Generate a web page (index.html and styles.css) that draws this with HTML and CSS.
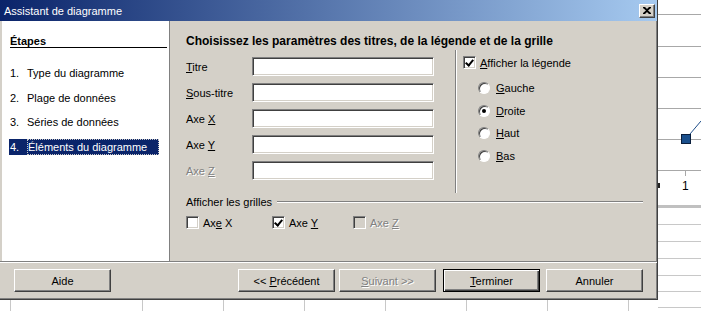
FILE: index.html
```html
<!DOCTYPE html>
<html lang="fr">
    <head>
        <meta charset="UTF-8" />
        <title>Assistant de diagramme</title>
        <link rel="stylesheet" href="styles.css">
    </head>
    <body>
        <div class="desk">
            <svg class="sheet" width="701" height="311" viewBox="0 0 701 311">
                <g stroke="#a8a8a8" stroke-width="1">
                    <line x1="658" y1="14.5" x2="701" y2="14.5" />
                    <line x1="658" y1="46.5" x2="701" y2="46.5" />
                    <line x1="658" y1="77.5" x2="701" y2="77.5" />
                    <line x1="658" y1="108.5" x2="701" y2="108.5" />
                    <line x1="658" y1="139.5" x2="701" y2="139.5" />
                    <line x1="658" y1="170.5" x2="701" y2="170.5" />
                    <line x1="685.5" y1="170" x2="685.5" y2="176" />
                </g>
                <rect x="658" y="205" width="43" height="3" fill="#c0c0c0" />
                <g stroke="#c8c8c8" stroke-width="1">
                    <line x1="658" y1="224.5" x2="701" y2="224.5" />
                    <line x1="658" y1="241.5" x2="701" y2="241.5" />
                    <line x1="658" y1="258.5" x2="701" y2="258.5" />
                    <line x1="658" y1="275.5" x2="701" y2="275.5" />
                    <line x1="658" y1="291.5" x2="701" y2="291.5" />
                    <line x1="658" y1="307.5" x2="701" y2="307.5" />
                    <line x1="10.5" y1="300" x2="10.5" y2="311" />
                    <line x1="142.5" y1="300" x2="142.5" y2="311" />
                    <line x1="223.5" y1="300" x2="223.5" y2="311" />
                    <line x1="304.5" y1="300" x2="304.5" y2="311" />
                    <line x1="385.5" y1="300" x2="385.5" y2="311" />
                    <line x1="466.5" y1="300" x2="466.5" y2="311" />
                    <line x1="547.5" y1="300" x2="547.5" y2="311" />
                    <line x1="628.5" y1="300" x2="628.5" y2="311" />
                </g>
                <line x1="690" y1="134" x2="701" y2="121" stroke="#1f4f8a" stroke-width="1" />
                <rect x="681.5" y="134.5" width="9" height="9" fill="#1a4f8c" stroke="#0a1e3c" />
                <rect x="658" y="183" width="2" height="5" fill="#222" />
                <text x="682" y="190" class="axis-num">1</text>
            </svg>

            <div class="dialog">
                <div class="titlebar">
                    <span>Assistant de diagramme</span>
                    <div class="close">
                        <svg width="8" height="7" viewBox="0 0 8 7">
                            <path d="M0 0h2l2 2 2-2h2v1L5 3.5 8 6v1H6L4 5 2 7H0V6l3-2.5L0 1z" fill="#000" />
                        </svg>
                    </div>
                </div>

                <div class="main">
                    <div class="steps">
                        <div class="steps-head">Étapes</div>
                        <ul class="step-list">
                            <li><span class="num">1.</span><span>Type du diagramme</span></li>
                            <li><span class="num">2.</span><span>Plage de données</span></li>
                            <li><span class="num">3.</span><span>Séries de données</span></li>
                            <li class="current"><span class="num">4.</span><span class="focus">Éléments du diagramme</span></li>
                        </ul>
                    </div>

                    <div class="content">
                        <h1>Choisissez les paramètres des titres, de la légende et de la grille</h1>
                        <div class="cols">
                            <div class="titles">
                                <label><u>T</u>itre</label>
                                <div class="field"></div>
                                <label><u>S</u>ous-titre</label>
                                <div class="field"></div>
                                <label>Axe <u>X</u></label>
                                <div class="field"></div>
                                <label>Axe <u>Y</u></label>
                                <div class="field"></div>
                                <label class="disabled">Axe <u>Z</u></label>
                                <div class="field"></div>
                            </div>
                            <div class="legend">
                                <div class="check-row">
                                    <span class="box checked"></span>
                                    <span><u>A</u>fficher la légende</span>
                                </div>
                                <div class="radios">
                                    <div class="radio-row"><span class="radio"></span><span><u>G</u>auche</span></div>
                                    <div class="radio-row"><span class="radio on"></span><span><u>D</u>roite</span></div>
                                    <div class="radio-row"><span class="radio"></span><span><u>H</u>aut</span></div>
                                    <div class="radio-row"><span class="radio"></span><span><u>B</u>as</span></div>
                                </div>
                            </div>
                        </div>

                        <div class="grids">
                            <div class="group-head">
                                <span>Afficher les grilles</span>
                                <span class="rule"></span>
                            </div>
                            <div class="grid-checks">
                                <div class="check-row w1"><span class="box"></span><span>Ax<u>e</u> X</span></div>
                                <div class="check-row w2"><span class="box checked"></span><span>Axe <u>Y</u></span></div>
                                <div class="check-row disabled"><span class="box off"></span><span>Axe <u>Z</u></span></div>
                            </div>
                        </div>
                    </div>
                </div>

                <div class="footer">
                    <div class="btn help"><span>Aide</span></div>
                    <div class="btn"><span>&lt;&lt; <u>P</u>récédent</span></div>
                    <div class="btn disabled next"><span><u>S</u>uivant &gt;&gt;</span></div>
                    <div class="btn default"><span><u>T</u>erminer</span></div>
                    <div class="btn cancel"><span>Annuler</span></div>
                </div>
            </div>
        </div>
    </body>
</html>
```

FILE: styles.css
```css
body {
    margin: 0;
    background: #fff;
    font-family: "Liberation Sans", Arial, sans-serif;
    font-size: 11px;
    color: #000;
}
.desk {
    position: relative;
    width: 701px;
    height: 311px;
    overflow: hidden;
}
.sheet {
    position: absolute;
    top: 0;
    left: 0;
}
.axis-num {
    font-family: "Liberation Sans", Arial, sans-serif;
    font-size: 12px;
    fill: #000;
}
u {
    text-decoration: underline;
    text-underline-offset: 1px;
}

/* window */
.dialog {
    position: absolute;
    top: 0;
    left: 0;
    width: 658px;
    height: 300px;
    box-sizing: border-box;
    background: #d4d0c8;
    border-right: 1px solid #404040;
    border-bottom: 1px solid #404040;
    box-shadow: inset -1px -1px #808080;
    display: flex;
    flex-direction: column;
}
.titlebar {
    height: 21px;
    flex: none;
    display: flex;
    align-items: center;
    justify-content: space-between;
    padding: 0 2px 0 4px;
    background: linear-gradient(to right, #0a246a, #a6caf0);
    color: #fff;
}
.close {
    width: 16px;
    height: 14px;
    box-sizing: border-box;
    background: #d4d0c8;
    border-top: 1px solid #fff;
    border-left: 1px solid #fff;
    border-right: 1px solid #404040;
    border-bottom: 1px solid #404040;
    box-shadow: inset -1px -1px #808080;
    display: flex;
    align-items: center;
    justify-content: center;
}

.main {
    height: 240px;
    flex: none;
    display: flex;
    padding-left: 2px;
}

/* steps panel */
.steps {
    width: 167px;
    background: #fff;
    border-right: 1px solid #808080;
    padding-top: 14px;
}
.steps-head {
    margin: 0 2px 0 8px;
    height: 12px;
    line-height: 12px;
    font-weight: bold;
    border-bottom: 1px solid #000;
}
.step-list {
    list-style: none;
    margin: 17px 0 0 7px;
    padding: 0;
    display: flex;
    flex-direction: column;
    gap: 8.5px;
}
.step-list li {
    width: 150px;
    height: 16px;
    line-height: 16px;
    display: flex;
    padding-left: 1px;
    box-sizing: border-box;
    white-space: nowrap;
}
.num {
    width: 17px;
}
.step-list .current {
    background: #0a246a;
    color: #fff;
}
.focus {
    flex: 1;
    line-height: 14px;
    border: 1px dotted #c8c8c8;
}

/* content */
.content {
    flex: 1;
    padding: 14px 14px 0 16px;
}
h1 {
    margin: 0 0 2px;
    font-size: 12px;
    line-height: 13px;
    font-weight: bold;
}
.cols {
    display: flex;
    height: 143px;
}
.titles {
    display: grid;
    grid-template-columns: 66px 182px;
    grid-auto-rows: 19px;
    row-gap: 7px;
    align-items: center;
    padding-top: 7px;
    width: 269px;
}
.field {
    height: 19px;
    box-sizing: border-box;
    background: #fff;
    border-top: 1px solid #808080;
    border-left: 1px solid #808080;
    border-right: 1px solid #fff;
    border-bottom: 1px solid #fff;
    box-shadow: inset 1px 1px #404040, inset -1px -1px #d4d0c8;
}
.disabled {
    color: #808080;
    text-shadow: 1px 1px #fff;
}
.legend {
    border-left: 1px solid #808080;
    box-shadow: inset 1px 0 #fff;
    padding: 6px 0 0 7px;
}
.check-row {
    display: flex;
    align-items: center;
    gap: 4px;
    height: 13px;
}
.box {
    width: 13px;
    height: 13px;
    box-sizing: border-box;
    background: #fff;
    border-top: 1px solid #808080;
    border-left: 1px solid #808080;
    border-right: 1px solid #fff;
    border-bottom: 1px solid #fff;
    box-shadow: inset 1px 1px #404040, inset -1px -1px #d4d0c8;
    flex: none;
    position: relative;
}
.box.checked::after {
    content: "";
    position: absolute;
    left: 2px;
    top: 1px;
    width: 3px;
    height: 6px;
    border: solid #000;
    border-width: 0 2px 2px 0;
    transform: translate(1px, 0) rotate(40deg);
}
.box.off {
    background: #d4d0c8;
}
.radios {
    margin-top: 12px;
    padding-left: 15px;
    display: flex;
    flex-direction: column;
    gap: 8.5px;
}
.radio-row {
    display: flex;
    align-items: center;
    gap: 6px;
    height: 14px;
}
.radio {
    width: 12px;
    height: 12px;
    box-sizing: border-box;
    border-radius: 50%;
    background: #fff;
    border: 1px solid;
    border-color: #808080 #fff #fff #808080;
    box-shadow: inset 1px 1px #404040;
    position: relative;
}
.radio.on::after {
    content: "";
    position: absolute;
    left: 3px;
    top: 3px;
    width: 4px;
    height: 4px;
    border-radius: 50%;
    background: #000;
}

.grids {
    margin-top: 2px;
}
.group-head {
    display: flex;
    align-items: center;
    height: 13px;
    gap: 5px;
}
.rule {
    flex: 1;
    height: 1px;
    background: #808080;
    box-shadow: 0 1px #fff;
}
.grid-checks {
    display: flex;
    margin-top: 8px;
}
.w1 {
    width: 86px;
}
.w2 {
    width: 81px;
}

/* buttons */
.footer {
    flex: none;
    border-top: 1px solid #808080;
    box-shadow: inset 0 1px #fff;
    display: flex;
    padding: 7px 0 0 14px;
}
.btn {
    width: 97px;
    height: 23px;
    box-sizing: border-box;
    border-top: 1px solid #fff;
    border-left: 1px solid #fff;
    border-right: 1px solid #404040;
    border-bottom: 1px solid #404040;
    box-shadow: inset -1px -1px #808080;
    display: flex;
    align-items: center;
    justify-content: center;
}
.help {
    margin-right: auto;
}
.next {
    margin-left: 4px;
}
.default {
    margin-left: 7px;
    border: 1px solid #000;
    box-shadow: inset 1px 1px #fff, inset -1px -1px #404040, inset -2px -2px #808080;
}
.cancel {
    margin-left: 6px;
    margin-right: 14px;
}
```
